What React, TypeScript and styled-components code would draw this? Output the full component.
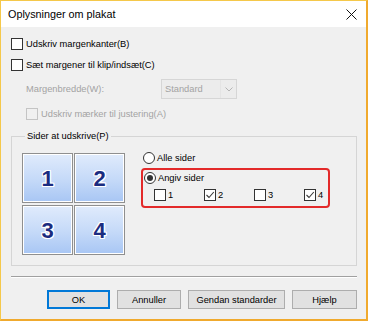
import React from 'react'
import styled, { createGlobalStyle, css } from 'styled-components'

const GlobalStyle = createGlobalStyle`
  html, body {
    margin: 0;
    padding: 0;
    background: #ffffff;
  }
  body {
    font-family: "Liberation Sans", Arial, sans-serif;
  }
`

const UI_FONT = css`
  font-family: "Liberation Sans", Arial, sans-serif;
  font-size: 9.3px;
  color: #000000;
`

const Window = styled.div`
  box-sizing: border-box;
  width: 368px;
  height: 321px;
  display: flex;
  flex-direction: column;
  border: 1px solid #f5c84a;
  border-right: 2px solid #f0aa2e;
  border-bottom: 2px solid #f0aa2e;
  background: #f0f0f0;
  overflow: hidden;
`

const TitleBar = styled.div`
  height: 26px;
  flex: none;
  display: flex;
  align-items: center;
  justify-content: space-between;
  background: #ffffff;
  padding: 0 9px 0 7px;
`

const Title = styled.span`
  font-family: "Liberation Sans", Arial, sans-serif;
  font-size: 10.8px;
  color: #000000;
`

const CloseIcon = styled.svg`
  width: 11px;
  height: 11px;
  display: block;
`

const Body = styled.div`
  flex: 1;
  display: flex;
  flex-direction: column;
  padding: 6px 9px 0 9px;
  ${UI_FONT}
`

const Row = styled.label<{ $indent?: number; $top?: number; $disabled?: boolean }>`
  display: flex;
  align-items: center;
  height: 21px;
  margin-left: ${p => p.$indent ?? 0}px;
  margin-top: ${p => p.$top ?? 0}px;
  color: ${p => (p.$disabled ? '#a3a3a3' : '#000000')};
  gap: 3px;
`

const Box = styled.span<{ $disabled?: boolean }>`
  box-sizing: border-box;
  width: 12px;
  height: 12px;
  flex: none;
  border: 1px solid ${p => (p.$disabled ? '#c4c4c4' : '#333333')};
  background: ${p => (p.$disabled ? '#f0f0f0' : '#ffffff')};
  display: flex;
  align-items: center;
  justify-content: center;
`

const MarginRow = styled.div`
  display: flex;
  align-items: center;
  height: 20px;
  margin-top: 4px;
  margin-left: 16px;
  color: #a3a3a3;
`

const MarginLabel = styled.span`
  width: 135px;
`

const Select = styled.div`
  box-sizing: border-box;
  width: 76px;
  height: 20px;
  display: flex;
  align-items: stretch;
  border: 1px solid #d6d6d6;
  background: #ececec;
  color: #a3a3a3;
`

const SelectValue = styled.span`
  flex: 1;
  display: flex;
  align-items: center;
  padding-left: 3px;
  border-right: 1px solid #e4e4e4;
`

const SelectArrow = styled.span`
  width: 15px;
  display: flex;
  align-items: center;
  justify-content: center;
`

const Group = styled.fieldset`
  margin: 6px 0 0 1px;
  padding: 11px 10px 10px 10px;
  border: 1px solid #d5d5d5;
  display: flex;
  align-items: flex-start;
  min-width: 0;
`

const Legend = styled.legend`
  padding: 0 2px;
  margin-left: 3px;
  line-height: 12px;
`

const Tiles = styled.div`
  display: grid;
  grid-template-columns: 51px 51px;
  grid-auto-rows: 50px;
  column-gap: 1px;
  row-gap: 2px;
  flex: none;
`

const Tile = styled.div`
  box-sizing: border-box;
  border: 1px solid #8f8f8f;
  box-shadow: inset 0 0 0 1px #ffffff;
  background: linear-gradient(to bottom, #e0ebfc 0%, #c4d9f8 55%, #a8c6f4 100%);
  display: flex;
  align-items: center;
  justify-content: center;
  padding-top: 1px;
  font-family: "Liberation Sans", Arial, sans-serif;
  font-size: 22px;
  font-weight: bold;
  color: #1b2c80;
  text-shadow: 1px 0 0 #fff, -1px 0 0 #fff, 0 1px 0 #fff, 0 -1px 0 #fff,
    1px 1px 0 #fff, -1px -1px 0 #fff, 1px -1px 0 #fff, -1px 1px 0 #fff;
`

const Choices = styled.div`
  display: flex;
  flex-direction: column;
  margin-left: 17px;
  margin-top: -2px;
`

const RadioRow = styled.label`
  display: flex;
  align-items: center;
  height: 14px;
  gap: 2px;
  margin-left: 1px;
`

const Radio = styled.span<{ $on?: boolean }>`
  box-sizing: border-box;
  width: 12px;
  height: 12px;
  border-radius: 50%;
  border: 1px solid #333333;
  background: #ffffff;
  display: flex;
  align-items: center;
  justify-content: center;
  flex: none;
  &::after {
    content: '';
    display: ${p => (p.$on ? 'block' : 'none')};
    width: 6px;
    height: 6px;
    border-radius: 50%;
    background: #333333;
  }
`

const Highlight = styled.div`
  box-sizing: border-box;
  width: 189px;
  margin-top: 3px;
  border: 2px solid #e32a2a;
  border-radius: 4px;
  padding: 1px 0 5px 0;
  margin-left: -1px;
`

const PageChecks = styled.div`
  display: grid;
  grid-template-columns: repeat(4, 50px);
  padding-left: 11px;
  margin-top: 3px;
`

const PageCheck = styled.label`
  display: flex;
  align-items: center;
  gap: 2px;
  height: 13px;
`

const Separator = styled.div`
  margin: 10px 0 0 1px;
  height: 1px;
  background: #a0a0a0;
  border-bottom: 1px solid #ffffff;
`

const Buttons = styled.div`
  display: flex;
  justify-content: flex-end;
  gap: 7px;
  margin-top: 12px;
`

const Button = styled.button<{ $w: number; $focus?: boolean }>`
  ${UI_FONT}
  box-sizing: border-box;
  width: ${p => p.$w}px;
  height: 19px;
  padding: 0;
  background: #e1e1e1;
  border: 1px solid ${p => (p.$focus ? '#0078d7' : '#adadad')};
  box-shadow: ${p => (p.$focus ? 'inset 0 0 0 1px #0078d7' : 'none')};
`

function Check({ checked }: { checked?: boolean }) {
  return (
    <svg width="10" height="10" viewBox="0 0 10 10">
      {checked && <path d="M1.5 5 L4 7.5 L8.8 2" fill="none" stroke="#3a3a3a" strokeWidth="1.1" />}
    </svg>
  )
}

export default function App() {
  return (
    <>
      <GlobalStyle />
      <Window>
        <TitleBar>
          <Title>Oplysninger om plakat</Title>
          <CloseIcon viewBox="0 0 11 11">
            <path d="M0.5 0.5 L10.5 10.5 M10.5 0.5 L0.5 10.5" stroke="#111" strokeWidth="1" />
          </CloseIcon>
        </TitleBar>
        <Body>
          <Row $indent={1}>
            <Box />
            <span>Udskriv margenkanter(B)</span>
          </Row>
          <Row $indent={1}>
            <Box />
            <span>Sæt margener til klip/indsæt(C)</span>
          </Row>
          <MarginRow>
            <MarginLabel>Margenbredde(W):</MarginLabel>
            <Select>
              <SelectValue>Standard</SelectValue>
              <SelectArrow>
                <svg width="8" height="5" viewBox="0 0 8 5">
                  <path d="M0.5 0.5 L4 4 L7.5 0.5" fill="none" stroke="#b5b5b5" strokeWidth="1" />
                </svg>
              </SelectArrow>
            </Select>
          </MarginRow>
          <Row $indent={16} $top={4} $disabled>
            <Box $disabled />
            <span>Udskriv mærker til justering(A)</span>
          </Row>
          <Group>
            <Legend>Sider at udskrive(P)</Legend>
            <Tiles>
              {[1, 2, 3, 4].map(n => (
                <Tile key={n}>{n}</Tile>
              ))}
            </Tiles>
            <Choices>
              <RadioRow>
                <Radio />
                <span>Alle sider</span>
              </RadioRow>
              <Highlight>
                <RadioRow>
                  <Radio $on />
                  <span>Angiv sider</span>
                </RadioRow>
                <PageChecks>
                  {[1, 2, 3, 4].map(n => (
                    <PageCheck key={n}>
                      <Box>
                        <Check checked={n % 2 === 0} />
                      </Box>
                      <span>{n}</span>
                    </PageCheck>
                  ))}
                </PageChecks>
              </Highlight>
            </Choices>
          </Group>
          <Separator />
          <Buttons>
            <Button $w={63} $focus>OK</Button>
            <Button $w={64}>Annuller</Button>
            <Button $w={97}>Gendan standarder</Button>
            <Button $w={65}>Hjælp</Button>
          </Buttons>
        </Body>
      </Window>
    </>
  )
}
